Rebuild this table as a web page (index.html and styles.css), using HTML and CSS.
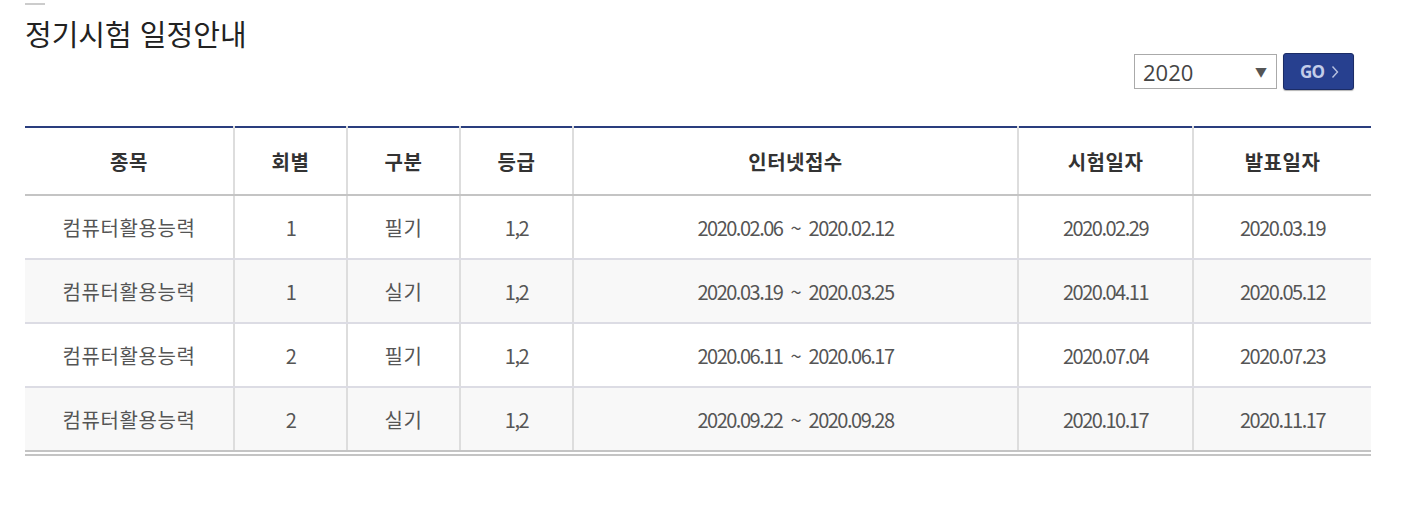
FILE: index.html
```html
<!DOCTYPE html>
<html lang="ko">
<head>
<meta charset="utf-8">
<link rel="stylesheet" href="styles.css">
</head>
<body>
<div class="page">
  <div class="topline"></div>
  <h2 class="title">정기시험 일정안내</h2>
  <div class="toolbar">
    <div class="select"><span class="select-val">2020</span><span class="select-arrow">▼</span></div>
    <button class="go">GO <svg width="8" height="14" viewBox="0 0 8 14"><path d="M1.5 1.5 L6.5 7 L1.5 12.5" fill="none" stroke="#b8c2e0" stroke-width="1.4"/></svg></button>
  </div>
  <table class="sched">
    <colgroup>
      <col class="c1"><col class="c2"><col class="c3"><col class="c4"><col class="c5"><col class="c6"><col class="c7">
    </colgroup>
    <thead>
      <tr><th>종목</th><th>회별</th><th>구분</th><th>등급</th><th>인터넷접수</th><th>시험일자</th><th>발표일자</th></tr>
    </thead>
    <tbody>
      <tr><td class="kr">컴퓨터활용능력</td><td>1</td><td class="kr">필기</td><td>1,2</td><td>2020.02.06<span class="til">~</span>2020.02.12</td><td>2020.02.29</td><td>2020.03.19</td></tr>
      <tr class="alt"><td class="kr">컴퓨터활용능력</td><td>1</td><td class="kr">실기</td><td>1,2</td><td>2020.03.19<span class="til">~</span>2020.03.25</td><td>2020.04.11</td><td>2020.05.12</td></tr>
      <tr><td class="kr">컴퓨터활용능력</td><td>2</td><td class="kr">필기</td><td>1,2</td><td>2020.06.11<span class="til">~</span>2020.06.17</td><td>2020.07.04</td><td>2020.07.23</td></tr>
      <tr class="alt"><td class="kr">컴퓨터활용능력</td><td>2</td><td class="kr">실기</td><td>1,2</td><td>2020.09.22<span class="til">~</span>2020.09.28</td><td>2020.10.17</td><td>2020.11.17</td></tr>
    </tbody>
  </table>
  <div class="bottomline"></div>
</div>
</body>
</html>
```
FILE: styles.css
```css
* { box-sizing: border-box; }
html, body { margin: 0; padding: 0; background: #fff; }
body { font-family: "Noto Sans CJK KR", "Noto Sans", sans-serif; color: #555; }
.page { width: 1371px; padding-left: 25px; }
.topline { width: 20px; height: 2px; background: #ccc; margin-top: 3px; }
.title { margin: 10px 0 0 0; font-size: 29px; font-weight: 400; color: #222; line-height: 36px; letter-spacing: 0; }
.toolbar { display: flex; justify-content: flex-end; align-items: center; gap: 6px; margin-top: 2px; padding-right: 17px; height: 37px; }
.select { width: 143px; height: 35px; border: 1px solid #aaa; display: flex; align-items: center; justify-content: space-between; padding: 0 9px 0 8px; }
.select-val { font-size: 22px; color: #444; font-family: "Open Sans", "Noto Sans", sans-serif; }
.select-arrow { font-size: 12px; color: #555; }
.go { width: 71px; height: 37px; background: #27408f; border: 1px solid #1b2c66; border-radius: 3px; color: #c3cde9; font-family: "Open Sans", sans-serif; font-weight: 700; font-size: 17px; letter-spacing: -0.8px; display: flex; align-items: center; justify-content: center; gap: 7px; padding: 0 0 0 2px; box-shadow: 0 1px 1px rgba(0,0,0,0.3); }
.sched { width: 1346px; margin-top: 36px; border-collapse: collapse; border-top: 2px solid #2a3e7e; table-layout: fixed; }
.c1 { width: 209px; } .c2 { width: 113px; } .c3 { width: 113px; } .c4 { width: 113px; } .c5 { width: 445px; } .c6 { width: 175px; } .c7 { width: 178px; }
.sched th { height: 68px; font-size: 20px; font-weight: 700; color: #333; border-bottom: 2px solid #c4c4c4; border-left: 2px solid #ddd; padding: 0; letter-spacing: 0.5px; }
.sched td { height: 64px; font-size: 20px; font-weight: 400; color: #555; text-align: center; border-bottom: 2px solid #dcdce4; border-left: 2px solid #ddd; padding: 0; letter-spacing: -1.5px; }
.sched td.kr { letter-spacing: 0.6px; }
.til { letter-spacing: 0; margin: 0 7px 0 8px; }
.sched th:first-child, .sched td:first-child { border-left: none; }
.sched tbody tr:last-child td { border-bottom: 2px solid #c4c4c4; }
.sched tr.alt td { background: #f8f8f8; }
.bottomline { width: 1346px; height: 2px; background: #c4c4c4; margin-top: 2px; }
```
